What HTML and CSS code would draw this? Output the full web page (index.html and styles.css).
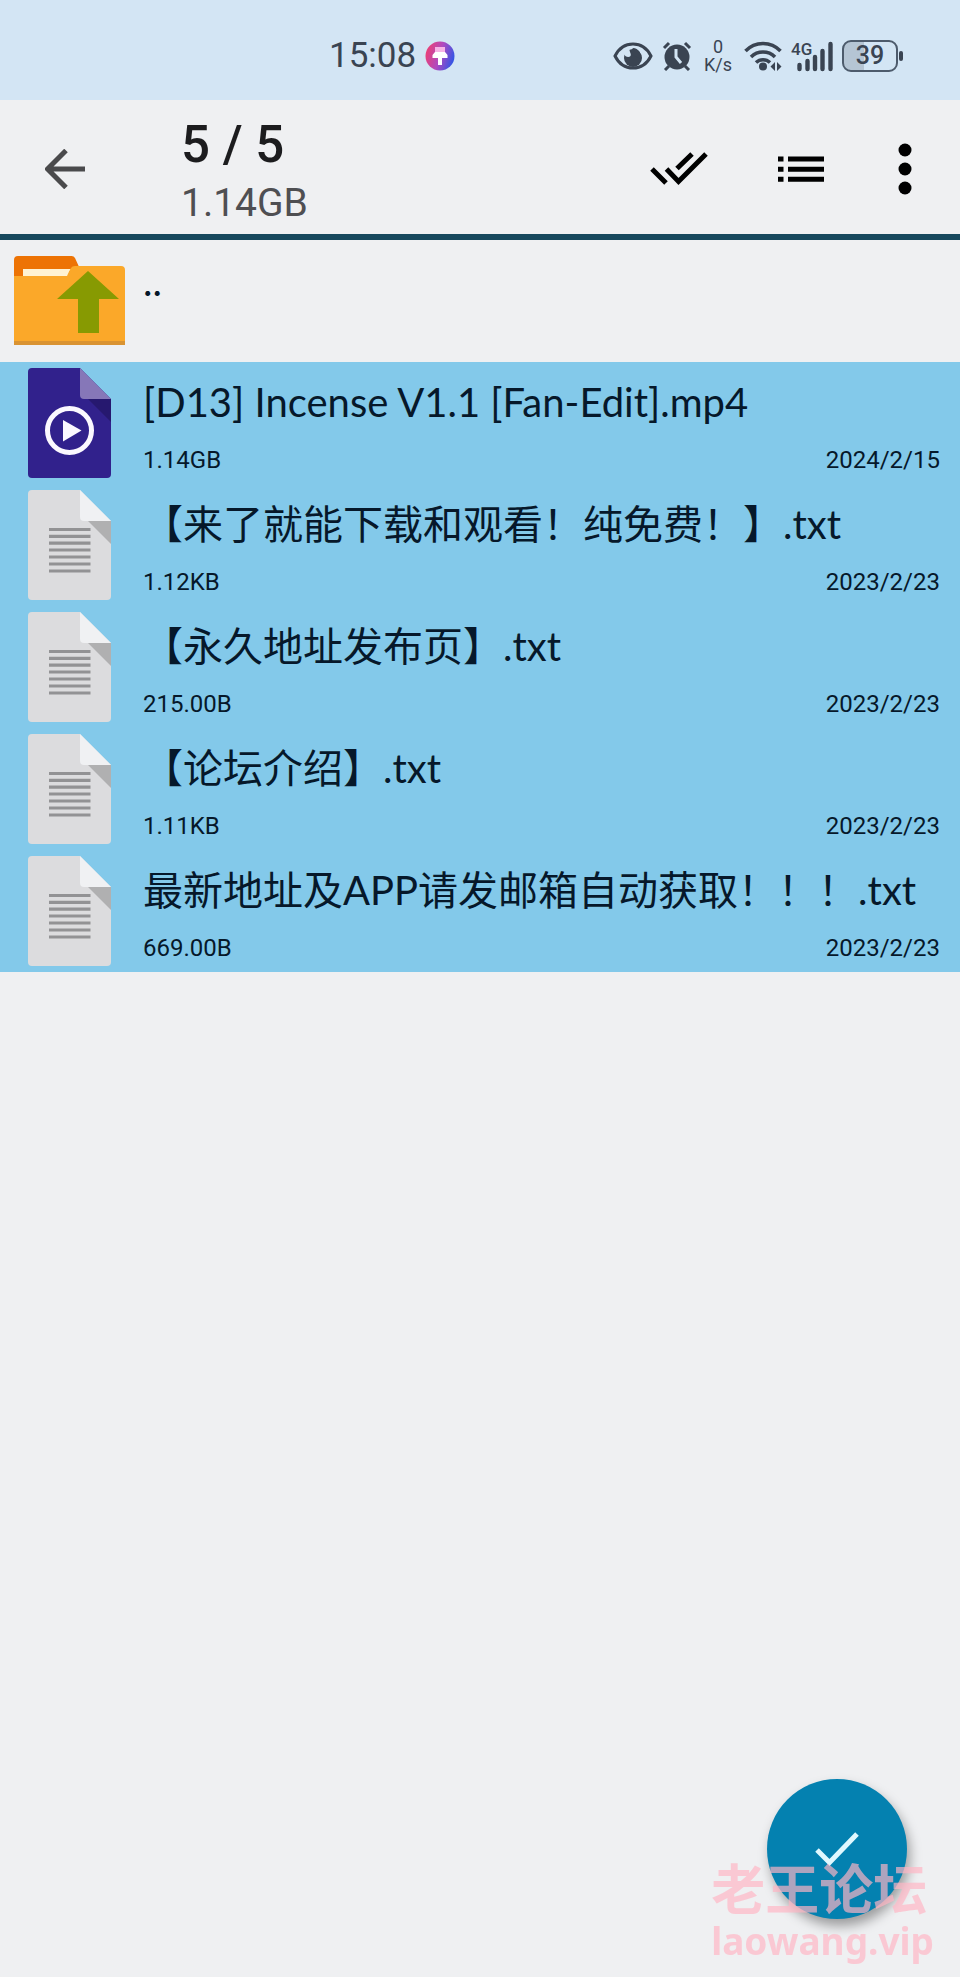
FILE: index.html
```html
<!DOCTYPE html>
<html lang="zh-CN">
<head>
<meta charset="utf-8">
<meta name="viewport" content="width=device-width, initial-scale=1">
<title>5 / 5</title>
<link rel="stylesheet" href="styles.css">
</head>
<body>
<svg class="defs" aria-hidden="true">
  <symbol id="doc" viewBox="0 0 83 110">
    <path d="M4 0H52L83 31V106a4 4 0 0 1-4 4H4a4 4 0 0 1-4-4V4a4 4 0 0 1 4-4Z" fill="#dcdcde"/>
    <path d="M60 31H83V54Z" fill="#b0b0b1"/>
    <path d="M52 0L83 31H56a4 4 0 0 1-4-4Z" fill="#f0f1f3"/>
    <path d="M21 39.500H62.500M21 46.300H62.500M21 53.200H62.500M21 60H62.500M21 67H62.500M21 74H62.500M21 81H62.500" stroke="#929294" stroke-width="3.200"/>
  </symbol>
</svg>

<div class="status">
  <div class="clock">
    <span class="time">15:08</span>
    <svg width="30" height="30" viewBox="0 0 30 30" aria-hidden="true">
      <defs><linearGradient id="pin" x1="0" y1=".3" x2="1" y2=".6"><stop offset="0" stop-color="#ee3f73"/><stop offset=".5" stop-color="#b04abf"/><stop offset="1" stop-color="#2f55e6"/></linearGradient></defs>
      <circle cx="15" cy="15" r="14.500" fill="url(#pin)"/>
      <path d="M10 6H20V11H10Z" fill="#f7b3e6"/>
      <path d="M10 11H20L22.500 14V17H17V24H13V17H7.500V14Z" fill="#fff"/>
    </svg>
  </div>
  <div class="signals">
    <svg width="40" height="30" viewBox="0 0 40 30" aria-hidden="true">
      <path d="M2 15C10 -1 30 -1 38 15C30 31 10 31 2 15Z" fill="none" stroke="#3a4452" stroke-width="3"/>
      <circle cx="20" cy="17" r="9" fill="#3a4452"/>
      <path d="M17 6C15 10 19 12 17.500 15C16 17 12 16 11 13L9 10Z" fill="#d3e5f4"/>
      <path d="M20 7A9 9 0 0 1 28 18L19 14Q16 11 20 7Z" fill="#3a4452"/>
    </svg>
    <svg width="30" height="30" viewBox="0 0 30 30" aria-hidden="true">
      <circle cx="15" cy="16" r="12.500" fill="#3a4452"/>
      <path d="M2 7L7 2M28 7L23 2M7 25L3 29M23 25L27 29" stroke="#3a4452" stroke-width="3"/>
      <path d="M14 8V16L19 22" fill="none" stroke="#d3e5f4" stroke-width="3"/>
    </svg>
    <div class="speed"><span>0</span><span>K/s</span></div>
    <svg width="38" height="32" viewBox="0 0 38 32" aria-hidden="true">
      <path d="M1.500 11A24 24 0 0 1 36.500 11M7 17A17 17 0 0 1 31 17M12 22.500A10 10 0 0 1 26 22.500" fill="none" stroke="#3a4452" stroke-width="3.500"/>
      <circle cx="19" cy="26.500" r="4" fill="#3a4452"/>
      <path d="M31 22V31L26.500 26.500ZM33 22V31L37.500 26.500Z" fill="#3a4452"/>
    </svg>
    <svg class="cell" width="42" height="32" viewBox="0 0 42 32" role="img" aria-label="4G">
      <text x="0" y="15">4G</text>
      <path d="M8.500 29V25M16.500 29V21M24 29V17M31.500 29V11M39.500 29V4" stroke="#3a4452" stroke-width="4.400" stroke-linecap="round"/>
    </svg>
    <div class="battery"><span>39</span></div>
  </div>
</div>

<header class="bar">
  <button class="icon" aria-label="返回">
    <svg width="40" height="40" viewBox="0 0 40 40"><path d="M40 20H3M21 1.500L2.500 20L21 38.500" fill="none" stroke="#4a4a4c" stroke-width="5"/></svg>
  </button>
  <div class="heading">
    <h1>5 / 5</h1>
    <p>1.14GB</p>
  </div>
  <div class="actions">
    <button class="icon" aria-label="全选">
      <svg width="58" height="34" viewBox="0 0 58 34"><path d="M2 17L16 31M16.500 17L28.500 29.500L56 2M27 16.500L42 2" fill="none" stroke="#000" stroke-width="5"/></svg>
    </button>
    <button class="icon" aria-label="列表">
      <svg width="50" height="26" viewBox="0 0 50 26"><path d="M0 3H5.500M10 3H46M0 13.300H5.500M10 13.300H46M0 23.300H5.500M10 23.300H46" stroke="#000" stroke-width="5"/></svg>
    </button>
    <button class="icon" aria-label="更多">
      <svg width="14" height="52" viewBox="0 0 14 52"><circle cx="7" cy="7" r="6.500"/><circle cx="7" cy="26" r="6.500"/><circle cx="7" cy="45" r="6.500"/></svg>
    </button>
  </div>
</header>

<main>
  <button class="row parent">
    <svg width="111" height="90" viewBox="0 0 111 90" aria-hidden="true">
      <path d="M0 21V5a4 4 0 0 1 4-4H57a4 4 0 0 1 4 2L66 14L56 21Z" fill="#ed7304"/>
      <path d="M9 14H60L54 24H9Z" fill="#fff3d2"/>
      <path d="M0 21H52L57 13Q58 11 61 11H107a4 4 0 0 1 4 4V90H0Z" fill="#fba829"/>
      <path d="M9 14H56L53 21H9Z" fill="#fff3d2"/>
      <path d="M0 86H111V90H0Z" fill="#d99332"/>
      <path d="M74 16L105 44H85V78H64V44H43Z" fill="#879a02"/>
    </svg>
    <span class="name">..</span>
  </button>
  <ul class="files">
    <li><button class="row">
      <svg width="83" height="110" viewBox="0 0 83 110" aria-hidden="true">
        <path d="M4 0H52L83 31V106a4 4 0 0 1-4 4H4a4 4 0 0 1-4-4V4a4 4 0 0 1 4-4Z" fill="#31218c"/>
        <path d="M60 31H83V54Z" fill="#26186f"/>
        <path d="M52 0L83 31H56a4 4 0 0 1-4-4Z" fill="#8677b8"/>
        <circle cx="41.500" cy="62.500" r="22" fill="none" stroke="#fbf8ff" stroke-width="5"/>
        <path d="M35 52V73.500L53.500 62.500Z" fill="#fbf8ff"/>
      </svg>
      <span class="info"><span class="name">[D13] Incense V1.1 [Fan-Edit].mp4</span><span class="meta"><span>1.14GB</span><span>2024/2/15</span></span></span>
    </button></li>
    <li><button class="row">
      <svg width="83" height="110" aria-hidden="true"><use href="#doc"/></svg>
      <span class="info"><span class="name">【来了就能下载和观看！纯免费！】.txt</span><span class="meta"><span>1.12KB</span><span>2023/2/23</span></span></span>
    </button></li>
    <li><button class="row">
      <svg width="83" height="110" aria-hidden="true"><use href="#doc"/></svg>
      <span class="info"><span class="name">【永久地址发布页】.txt</span><span class="meta"><span>215.00B</span><span>2023/2/23</span></span></span>
    </button></li>
    <li><button class="row">
      <svg width="83" height="110" aria-hidden="true"><use href="#doc"/></svg>
      <span class="info"><span class="name">【论坛介绍】.txt</span><span class="meta"><span>1.11KB</span><span>2023/2/23</span></span></span>
    </button></li>
    <li><button class="row">
      <svg width="83" height="110" aria-hidden="true"><use href="#doc"/></svg>
      <span class="info"><span class="name">最新地址及APP请发邮箱自动获取！！！.txt</span><span class="meta"><span>669.00B</span><span>2023/2/23</span></span></span>
    </button></li>
  </ul>
</main>

<button class="fab" aria-label="确定">
  <svg width="44" height="34" viewBox="0 0 44 34"><path d="M2 18L14.500 30.500L42 2" fill="none" stroke="#dff8ff" stroke-width="5"/></svg>
</button>
<div class="watermark"><span class="mark-name">老王论坛</span><span class="mark-site">laowang.vip</span></div>
</body>
</html>
```
FILE: styles.css
```css
* {
  box-sizing: border-box;
}

body {
  margin: 0;
  min-height: 100vh;
  background: #eff0f2;
  color: #06182a;
  font-family: Lato, "Noto Sans CJK SC", sans-serif;
}

button {
  padding: 0;
  border: 0;
  background: none;
  color: inherit;
  font: inherit;
}

svg {
  display: block;
  flex: none;
}

.defs {
  position: absolute;
  width: 0;
  height: 0;
}

.status {
  display: flex;
  justify-content: space-between;
  align-items: center;
  height: 100px;
  padding: 12px 57px 0 329px;
  background: #d3e5f4;
  color: #3a4452;
}

.clock,
.signals {
  display: flex;
  align-items: center;
  gap: 9px;
}

.time {
  font: 35px/40px Roboto, sans-serif;
}

.speed {
  display: flex;
  flex-direction: column;
  align-items: center;
  margin: 0 3px;
  font: 18px/18px Roboto, sans-serif;
}

.cell text {
  fill: #3a4452;
  font: 500 17px Roboto, sans-serif;
}

.battery {
  position: relative;
  width: 56px;
  height: 32px;
  margin-right: 5px;
  border: 2px solid #4d5b6c;
  border-radius: 9px;
  background: linear-gradient(90deg, #b5c5d4 39%, transparent 39%);
  font: 500 25px/28px Roboto, sans-serif;
  text-align: center;
}

.battery::after {
  content: "";
  position: absolute;
  top: 9px;
  right: -7px;
  width: 4px;
  height: 10px;
  border-radius: 2px;
  background: #3a4452;
}

.bar {
  display: flex;
  align-items: center;
  height: 140px;
  padding: 4px 48px 0 45px;
  border-bottom: 6px solid #17485d;
}

.heading {
  flex: 1;
  margin-left: 96px;
  padding-top: 3px;
}

.heading h1 {
  margin: 0 0 4px;
  color: #1c1c1e;
  font: 500 51px/60px Roboto, sans-serif;
}

.heading p {
  margin: 0;
  color: #4f4f52;
  font: 39px/48px Roboto, sans-serif;
}

.actions {
  display: flex;
  align-items: center;
  gap: 70px;
}

.row {
  display: flex;
  width: 100%;
  gap: 32px;
  padding: 6px 20px 6px 28px;
  text-align: left;
}

.parent {
  gap: 18px;
  padding: 15px 20px 17px 14px;
}

.files {
  margin: 0;
  padding: 0;
  list-style: none;
  background: #83c9ea;
}

.info {
  flex: 1;
  padding-top: 8px;
}

.name {
  display: block;
  font-size: 40px;
  line-height: 52px;
}

.meta {
  display: flex;
  justify-content: space-between;
  margin-top: 16px;
  font: 24px/32px Roboto, sans-serif;
}

.fab {
  position: fixed;
  right: 53px;
  bottom: 58px;
  display: grid;
  place-items: center;
  width: 140px;
  height: 140px;
  border-radius: 50%;
  background: #0481b0;
  box-shadow: 3px 7px 12px rgba(0, 0, 0, 0.35);
}

.watermark {
  position: fixed;
  right: 26px;
  bottom: 12px;
  display: flex;
  flex-direction: column;
  color: rgba(255, 182, 196, 0.68);
  pointer-events: none;
}

.mark-name {
  font: bold 54px/60px "Noto Sans CJK SC", sans-serif;
}

.mark-site {
  font: bold 37px/48px "Noto Sans", sans-serif;
}
```
